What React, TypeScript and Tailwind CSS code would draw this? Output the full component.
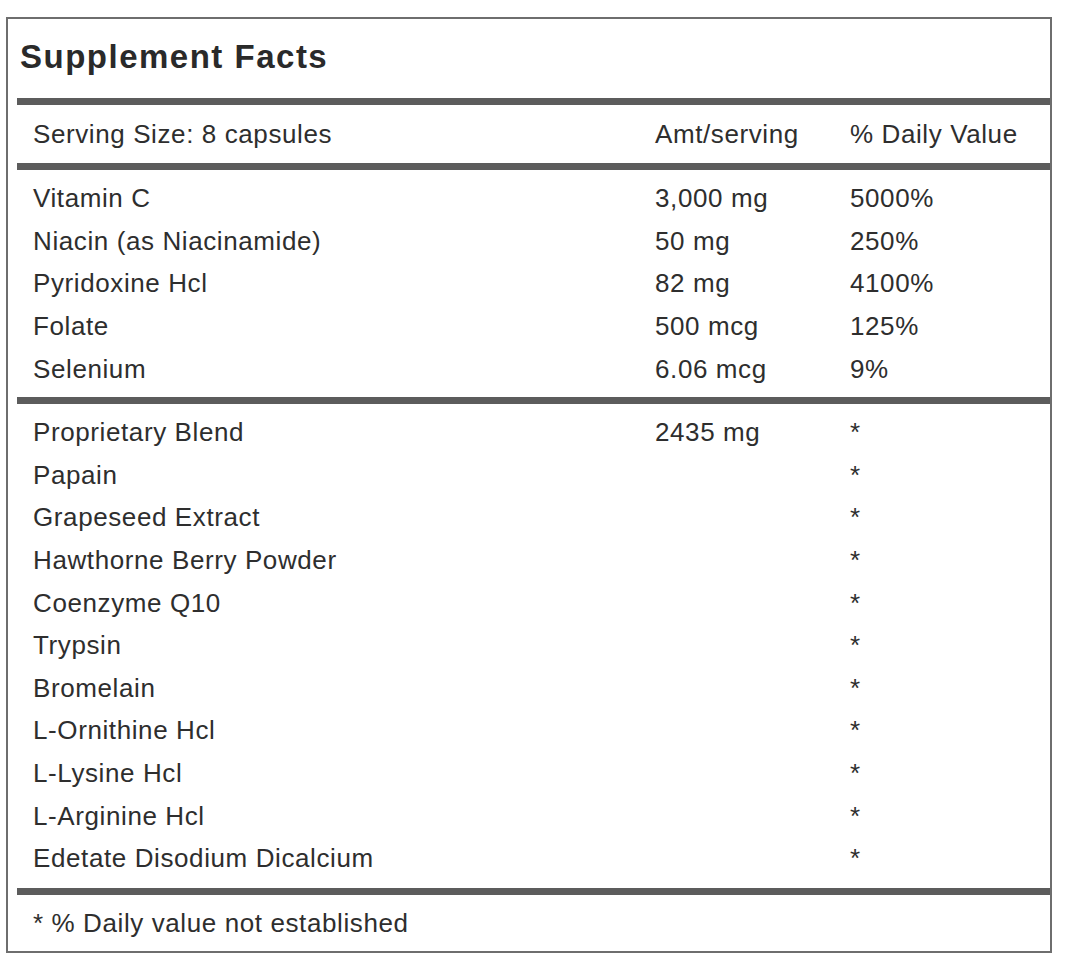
const vitamins = [
  { name: 'Vitamin C', amt: '3,000 mg', dv: '5000%' },
  { name: 'Niacin (as Niacinamide)', amt: '50 mg', dv: '250%' },
  { name: 'Pyridoxine Hcl', amt: '82 mg', dv: '4100%' },
  { name: 'Folate', amt: '500 mcg', dv: '125%' },
  { name: 'Selenium', amt: '6.06 mcg', dv: '9%' },
];

const blend = [
  { name: 'Proprietary Blend', amt: '2435 mg' },
  { name: 'Papain' },
  { name: 'Grapeseed Extract' },
  { name: 'Hawthorne Berry Powder' },
  { name: 'Coenzyme Q10' },
  { name: 'Trypsin' },
  { name: 'Bromelain' },
  { name: 'L-Ornithine Hcl' },
  { name: 'L-Lysine Hcl' },
  { name: 'L-Arginine Hcl' },
  { name: 'Edetate Disodium Dicalcium' },
];

function Bar() {
  return <div className="h-[7px] bg-[#5c5c5c]" />;
}

function Row({ name, amt, dv }: { name: string; amt?: string; dv?: string }) {
  return (
    <div className="grid grid-cols-[622px_195px_1fr] h-[42.6px] items-center pl-[16px]">
      <span>{name}</span>
      <span>{amt ?? ''}</span>
      <span>{dv ?? ''}</span>
    </div>
  );
}

export default function App() {
  return (
    <div className="min-h-[976px] bg-white pt-[17px] pl-[6px] font-[family-name:'Liberation_Sans',Arial,sans-serif] text-[#2e2e2e]">
      <div className="w-[1046px] border-2 border-[#6e6e6e] pl-[9px]">
        {/* Title */}
        <div className="h-[79px] flex items-center pb-[4px] pl-[3px]">
          <h1 className="text-[33px] leading-none font-bold tracking-[1.5px] text-[#2a2a2a]">Supplement Facts</h1>
        </div>
        <Bar />

        <div className="text-[26px] leading-none tracking-[0.6px]">
          {/* Header */}
          <div className="grid grid-cols-[622px_195px_1fr] h-[58px] items-center pl-[16px]">
            <span>Serving Size: 8 capsules</span>
            <span>Amt/serving</span>
            <span>% Daily Value</span>
          </div>
          <Bar />

          {/* Vitamins */}
          <div className="h-[227px] pt-[7px]">
            {vitamins.map((v) => (
              <Row key={v.name} {...v} />
            ))}
          </div>
          <Bar />

          {/* Blend */}
          <div className="h-[484px] pt-[7px]">
            {blend.map((b) => (
              <Row key={b.name} name={b.name} amt={b.amt} dv="*" />
            ))}
          </div>
          <Bar />

          {/* Footer */}
          <div className="h-[56px] flex items-center pl-[16px]">
            * % Daily value not established
          </div>
        </div>
      </div>
    </div>
  );
}
